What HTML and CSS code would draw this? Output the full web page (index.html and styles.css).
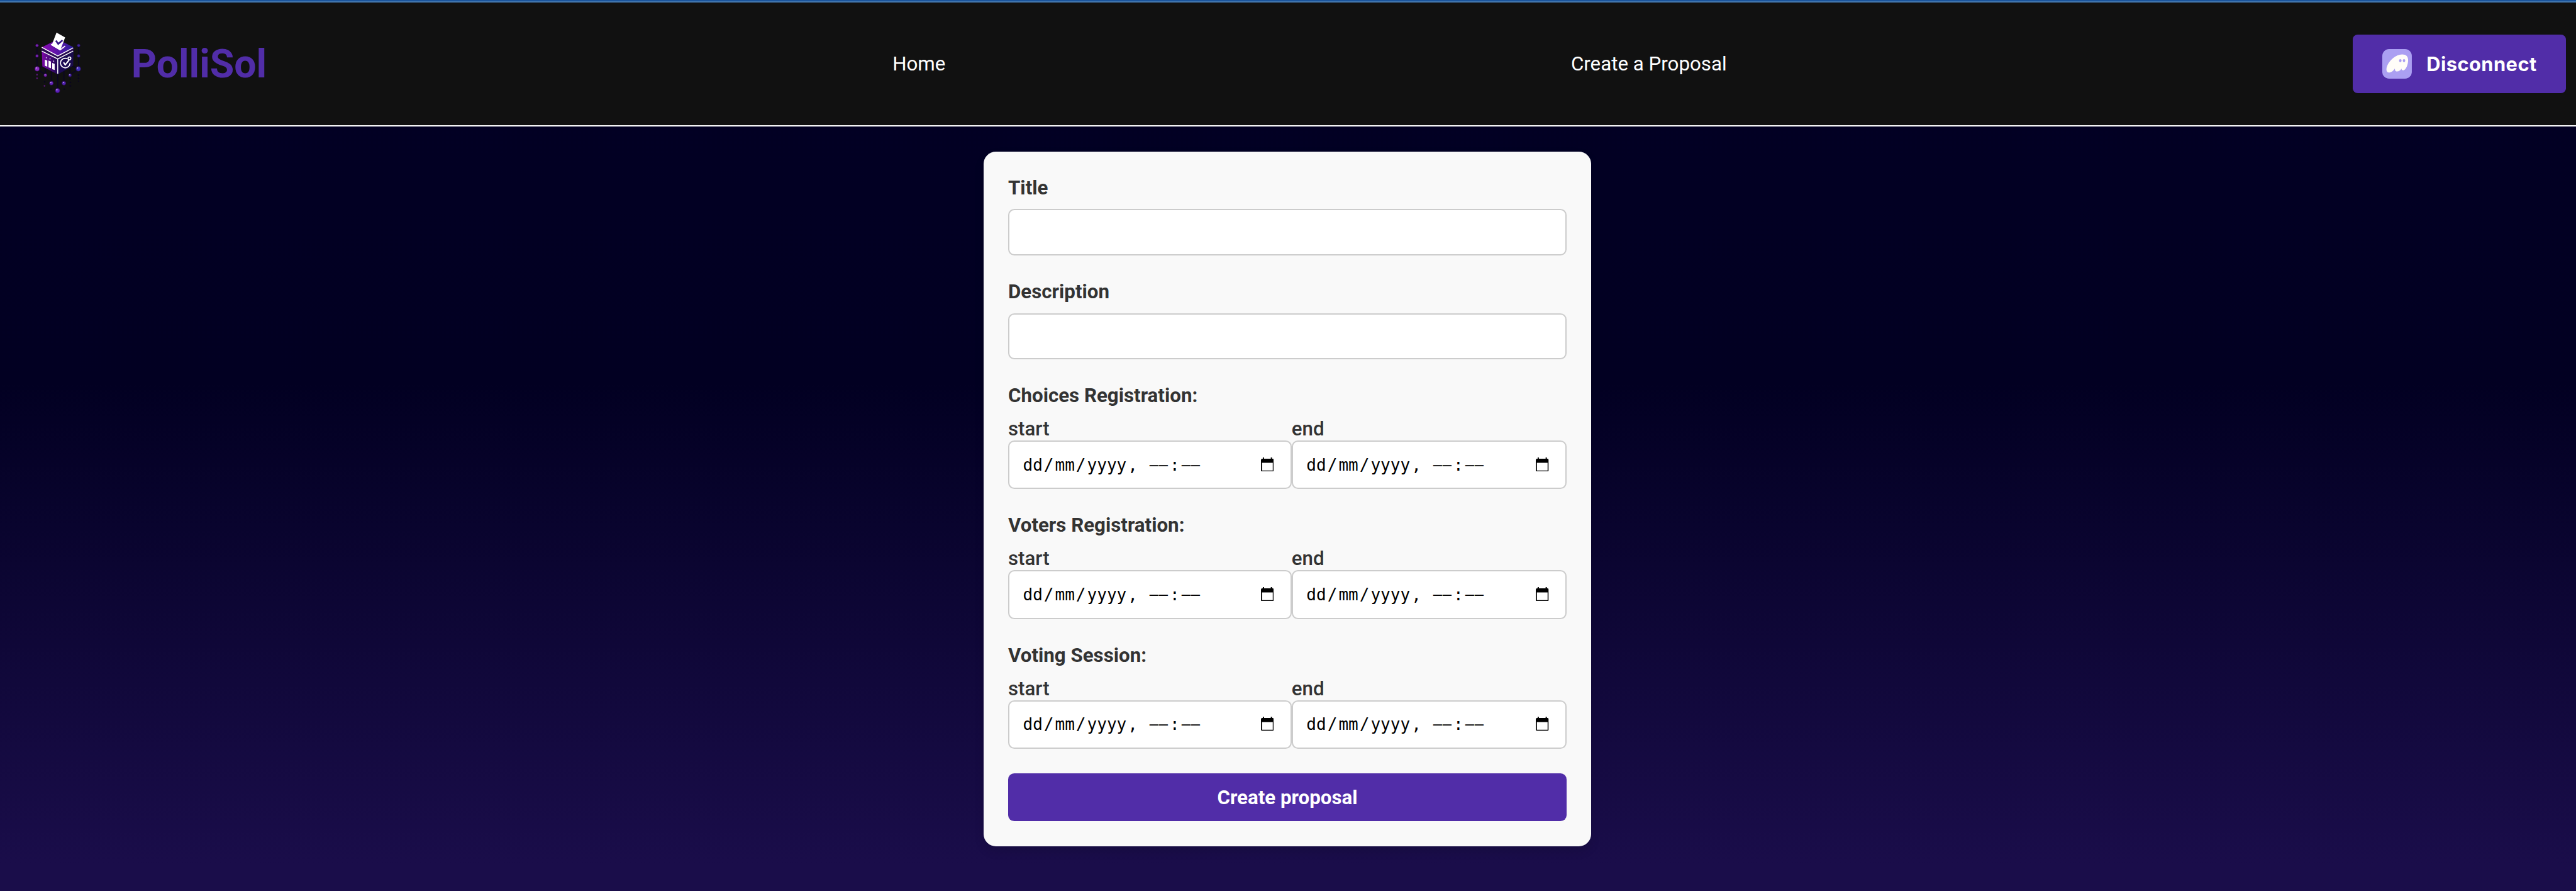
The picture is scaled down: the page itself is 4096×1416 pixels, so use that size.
FILE: index.html
```html
<!DOCTYPE html>
<html lang="en">
<head>
<meta charset="utf-8">
<title>PolliSol</title>
<link rel="stylesheet" href="styles.css">
</head>
<body>
<svg class="defs" width="0" height="0" aria-hidden="true">
  <symbol id="calendar" viewBox="0 0 21 23">
    <path d="M3 0h2v2h11V0h2v2h1a2 2 0 0 1 2 2v17a2 2 0 0 1-2 2H2a2 2 0 0 1-2-2V4a2 2 0 0 1 2-2h1zM1.800 8.800v12.400h17.400v-12.400z" fill-rule="evenodd"/>
  </symbol>
</svg>
<div class="page">
  <header class="header">
    <div class="brand">
      <svg class="logo" viewBox="0 0 110 120">
        <defs>
          <linearGradient id="top" x1="0" x2="1"><stop offset="0" stop-color="#8d0bb4"/><stop offset="1" stop-color="#2a1f9c"/></linearGradient>
          <linearGradient id="left" x1="0" x2="1"><stop offset="0" stop-color="#7c0aa8"/><stop offset="1" stop-color="#1c0850"/></linearGradient>
          <linearGradient id="right" x1="0" x2="1"><stop offset="0" stop-color="#1e0a58"/><stop offset="1" stop-color="#1a0c4c"/></linearGradient>
        </defs>
        <g stroke="#0b0426" stroke-width="1.6" fill="none">
          <path d="M20.3 34v38M88 34v38M34 82V70M74 82V70M43.700 95V74M64 95V74M54 107V78M20.500 72L34 82M87.500 72L74 82M20.500 72l11-5M87.500 72l-11-5"/>
        </g>
        <path d="M28 38L54 52v29L29 68z" fill="url(#left)"/>
        <path d="M54 52l26-14-1 29-25 14z" fill="url(#right)"/>
        <path d="M28 37L54 24l26 13-26 14z" fill="url(#top)"/>
        <path d="M28 37L54 51l26-14v6L54 56 28 43z" fill="#26094f"/>
        <path d="M28 37l26 14 25-13M28 43l26 13 25-13M54 56v24" fill="none" stroke="#fff" stroke-width="1.500"/>
        <path d="M43 32l15 9 8-6" fill="none" stroke="#fff" stroke-width="1.800"/>
        <path d="M52 13l14 8-8 21-14-8z" fill="#fff"/>
        <path d="M51 26l3.800 5.500 7-6" fill="none" stroke="#36178a" stroke-width="2.800"/>
        <path d="M33 57l4 1.500v10l-4-1.500zM39 58.500l4 1.500v11l-4-1.500zM45 62.500l4 1.500v10l-4-1.500z" fill="#fff"/>
        <g fill="#d9c6ef"><circle cx="35.500" cy="54" r="1"/><circle cx="41.500" cy="55.700" r="1"/><circle cx="47.300" cy="59.500" r="1"/></g>
        <path d="M69.500 55.500a7.800 7.800 0 1 0 4.500 7" fill="none" stroke="#fff" stroke-width="1.800"/>
        <path d="M63.500 61.500l2.700 4 6-7.500" fill="none" stroke="#fff" stroke-width="2.200"/>
        <circle cx="73" cy="55" r="2.300" fill="none" stroke="#fff" stroke-width="1.800"/>
        <g fill="#7a23b5" stroke="#24083f" stroke-width=".7">
          <circle cx="20.300" cy="34" r="2.400"/><circle cx="20.300" cy="51" r="2.400"/><circle cx="20.500" cy="72" r="3.900" fill="#8a2cc0"/>
          <circle cx="34" cy="82.300" r="2.600"/><circle cx="43.700" cy="95.300" r="3.200" fill="#6424b8"/><circle cx="53.700" cy="107.300" r="3.800" fill="#5a1fb8"/>
          <circle cx="64" cy="95.300" r="3.200" fill="#5424b4"/><circle cx="74" cy="82.300" r="2.600" fill="#4024a0"/><circle cx="87.500" cy="72" r="3.900" fill="#4030b8"/>
          <circle cx="88" cy="34" r="2.400" fill="#4028a0"/><circle cx="88" cy="51" r="2.400" fill="#3c289c"/>
        </g>
        <g fill="#c9aee8"><circle cx="19.200" cy="70.500" r="1"/><circle cx="52.600" cy="106" r="1.100"/><circle cx="42.800" cy="94.200" r=".9"/><circle cx="63.200" cy="94.200" r=".9"/><circle cx="86.300" cy="70.500" r="1"/><circle cx="33.400" cy="81.500" r=".7"/><circle cx="73.400" cy="81.500" r=".7"/></g>
        <g fill="#5a1478"><circle cx="20.300" cy="81.500" r="1.400"/><circle cx="20.300" cy="87.300" r="1.300"/><circle cx="32.500" cy="99.700" r="1.400"/></g>
        <g fill="#090420"><circle cx="32.700" cy="93" r="1.200"/><circle cx="43" cy="105" r="1.200"/><circle cx="64.500" cy="105" r="1.200"/><circle cx="74.500" cy="88.500" r="1.200"/><circle cx="74.500" cy="94" r="1.200"/><circle cx="74.500" cy="99.700" r="1.400"/><circle cx="87.800" cy="82" r="1.400"/><circle cx="87.800" cy="87.500" r="1.300"/><circle cx="87.800" cy="92" r="1.100"/></g>
      </svg>
      <span class="brand-name">PolliSol</span>
    </div>
    <nav class="nav">
      <a class="nav-home">Home</a>
      <a class="nav-create">Create a Proposal</a>
    </nav>
    <button class="wallet">
      <svg class="wallet-icon" viewBox="0 0 48 48">
        <rect width="48" height="48" rx="11" fill="#ab9ff2"/>
        <path d="M20.600 31.400C18.300 35 14.400 38.200 10.700 38.200C8.200 38.200 6.700 36.500 6.700 33C6.700 24 18.200 8.800 32.500 8.800C38.500 8.800 42 12 42 18C42 26 38 34.500 34.200 34.500C31.800 34.500 31.300 33.600 31.300 31.800C29.300 34.800 27 36.400 24.400 36.400C21.300 36.400 20.100 34.500 20.600 31.400Z" fill="#fffdf8"/>
        <ellipse cx="29.300" cy="18.800" rx="2" ry="2.400" fill="#ab9ff2"/>
        <ellipse cx="35.300" cy="18.800" rx="2" ry="2.400" fill="#ab9ff2"/>
      </svg>
      <span>Disconnect</span>
    </button>
  </header>
  <main class="main">
    <form class="card">
      <label class="heading" for="title">Title</label>
      <input class="text-input" id="title" type="text">
      <label class="heading" for="description">Description</label>
      <input class="text-input" id="description" type="text">

      <h2 class="heading">Choices Registration:</h2>
      <div class="range">
        <div class="bound"><span class="bound-label">start</span>
          <div class="date"><span class="value"><span class="part">dd</span>/<span class="part">mm</span>/<span class="part">yyyy</span>,&nbsp;<span class="part"><i>–</i><i>–</i></span>:<span class="part"><i>–</i><i>–</i></span></span><svg class="calendar"><use href="#calendar"/></svg></div></div>
        <div class="bound"><span class="bound-label">end</span>
          <div class="date"><span class="value"><span class="part">dd</span>/<span class="part">mm</span>/<span class="part">yyyy</span>,&nbsp;<span class="part"><i>–</i><i>–</i></span>:<span class="part"><i>–</i><i>–</i></span></span><svg class="calendar"><use href="#calendar"/></svg></div></div>
      </div>

      <h2 class="heading">Voters Registration:</h2>
      <div class="range">
        <div class="bound"><span class="bound-label">start</span>
          <div class="date"><span class="value"><span class="part">dd</span>/<span class="part">mm</span>/<span class="part">yyyy</span>,&nbsp;<span class="part"><i>–</i><i>–</i></span>:<span class="part"><i>–</i><i>–</i></span></span><svg class="calendar"><use href="#calendar"/></svg></div></div>
        <div class="bound"><span class="bound-label">end</span>
          <div class="date"><span class="value"><span class="part">dd</span>/<span class="part">mm</span>/<span class="part">yyyy</span>,&nbsp;<span class="part"><i>–</i><i>–</i></span>:<span class="part"><i>–</i><i>–</i></span></span><svg class="calendar"><use href="#calendar"/></svg></div></div>
      </div>

      <h2 class="heading">Voting Session:</h2>
      <div class="range">
        <div class="bound"><span class="bound-label">start</span>
          <div class="date"><span class="value"><span class="part">dd</span>/<span class="part">mm</span>/<span class="part">yyyy</span>,&nbsp;<span class="part"><i>–</i><i>–</i></span>:<span class="part"><i>–</i><i>–</i></span></span><svg class="calendar"><use href="#calendar"/></svg></div></div>
        <div class="bound"><span class="bound-label">end</span>
          <div class="date"><span class="value"><span class="part">dd</span>/<span class="part">mm</span>/<span class="part">yyyy</span>,&nbsp;<span class="part"><i>–</i><i>–</i></span>:<span class="part"><i>–</i><i>–</i></span></span><svg class="calendar"><use href="#calendar"/></svg></div></div>
      </div>
      <button class="submit" type="button">Create proposal</button>
    </form>
  </main>
</div>
</body>
</html>
```
FILE: styles.css
```css
:root {
  --u: calc(100vw / 4188);
}
* {
  box-sizing: border-box;
}
body {
  margin: 0;
  overflow: hidden;
  font-family: Roboto, sans-serif;
  font-size: calc(32 * var(--u));
}
.defs {
  position: absolute;
}
.page {
  display: flex;
  flex-direction: column;
  height: 100vh;
  background: linear-gradient(#020024 0, #020022 43%, #1a0d4a 97%);
}
.header {
  display: flex;
  align-items: center;
  flex: none;
  height: 201px;
  padding-right: calc(16 * var(--u));
  background: #111;
  border-top: 4px solid #4478b0;
  border-bottom: 2px solid #fff;
  color: #fff;
}
.page::before {
  content: "";
  position: absolute;
  top: 0;
  left: 0;
  right: 0;
  height: 2px;
  background: #1b559d;
}
.brand {
  display: flex;
  align-items: center;
  width: calc(1451 * var(--u));
  padding-left: calc(40 * var(--u));
}
.logo {
  width: calc(110 * var(--u));
  height: calc(120 * var(--u));
  margin-top: calc(-7 * var(--u));
}
.brand-name {
  margin-left: calc(63.5 * var(--u));
  color: #512da8;
  font-size: calc(64 * var(--u));
  font-weight: 700;
}
.nav {
  display: flex;
  flex: 1;
}
.nav-home {
  width: calc(1103 * var(--u));
}
.wallet {
  display: flex;
  align-items: center;
  gap: calc(24 * var(--u));
  width: calc(347 * var(--u));
  height: calc(96 * var(--u));
  padding: 0 0 0 calc(48 * var(--u));
  border: 0;
  border-radius: calc(8 * var(--u));
  background: #512da8;
  color: #fff;
  font-family: Inter, sans-serif;
  font-size: calc(31.5 * var(--u));
  font-weight: 700;
  letter-spacing: calc(.45 * var(--u));
}
.wallet-icon {
  width: calc(48 * var(--u));
  height: calc(48 * var(--u));
}
.main {
  display: flex;
  justify-content: center;
  padding: calc(40.4 * var(--u)) calc(2 * var(--u)) 0 0;
}
.card {
  display: flex;
  flex-direction: column;
  width: calc(988 * var(--u));
  height: calc(1129 * var(--u));
  padding: calc(40 * var(--u));
  border-radius: calc(20 * var(--u));
  background: #f9f9f9;
  box-shadow: 0 calc(8 * var(--u)) calc(16 * var(--u)) rgba(0, 0, 0, .1);
  color: #333;
}
.heading {
  margin: 0 0 calc(16 * var(--u));
  font-size: calc(32 * var(--u));
  line-height: calc(38 * var(--u));
  font-weight: 700;
}
.text-input {
  height: calc(75 * var(--u));
  margin: 0 0 calc(40 * var(--u));
  border: 2px solid #ccc;
  border-radius: calc(10 * var(--u));
  background: #fff;
}
.range {
  display: grid;
  grid-template-columns: 461fr 447fr;
  margin-bottom: calc(40 * var(--u));
}
.bound-label {
  display: block;
  line-height: calc(38 * var(--u));
  font-weight: 500;
}
.date {
  display: flex;
  align-items: center;
  justify-content: space-between;
  height: calc(79 * var(--u));
  padding: 0 calc(27 * var(--u)) 0 calc(20 * var(--u));
  border: 2px solid #ccc;
  border-radius: calc(10 * var(--u));
  background: #fff;
  color: #000;
  font-family: "DejaVu Sans Mono", monospace;
  font-size: calc(26.67 * var(--u));
}
.part {
  padding: 0 calc(2 * var(--u));
}
.part i {
  display: inline-block;
  font-style: normal;
  transform: translateY(-1px) scaleX(.91);
}
.calendar {
  width: calc(21 * var(--u));
  height: calc(23 * var(--u));
  margin-bottom: calc(2 * var(--u));
}
.submit {
  height: calc(78 * var(--u));
  border: 0;
  border-radius: calc(10 * var(--u));
  background: #512da8;
  color: #fff;
  font-family: Roboto, sans-serif;
  font-size: calc(32 * var(--u));
  font-weight: 700;
}
```
